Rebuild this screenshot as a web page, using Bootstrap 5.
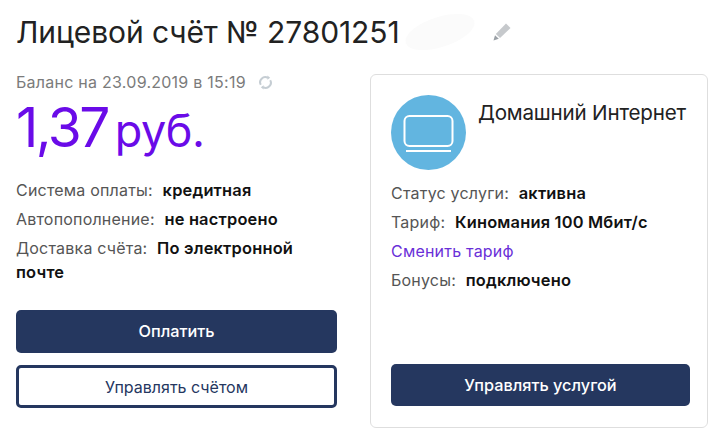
<!DOCTYPE html>
<html lang="ru">
<head>
    <meta charset="UTF-8">
    <meta name="viewport" content="width=device-width, initial-scale=1.0">
    <title>Лицевой счёт</title>
    <link rel="stylesheet" href="https://cdn.jsdelivr.net/npm/bootstrap@5.3.0/dist/css/bootstrap.min.css">
    <style>
        body {
            background-color: #fff;
            font-family: "Inter", "Liberation Sans", sans-serif;
            color: #222;
            overflow: hidden;
        }
        .page-wrap {
            width: 714px;
            height: 439px;
            padding: 0 6px 0 16px;
        }
        .title-row {
            height: 75px;
            padding-bottom: 11px;
        }
        .title-text {
            font-size: 30px;
            font-weight: 400;
            line-height: 52px;
            letter-spacing: -.1px;
            margin: 0;
        }
        .smudge {
            width: 72px;
            height: 30px;
            margin: 0 17px 0 4px;
            background: #fbfbfb;
            border-radius: 50%;
            transform: rotate(-18deg);
        }
        .left-side {
            width: 321px;
            margin-top: -3px;
        }
        .balance-date {
            font-size: 16px;
            color: #7b7b7b;
            line-height: 20px;
            letter-spacing: .25px;
            white-space: nowrap;
            margin-bottom: 3px;
        }
        .refresh-icon {
            margin-left: 12px;
        }
        .amount {
            color: #6a0be8;
            line-height: 64px;
            font-size: 55px;
            letter-spacing: -2.5px;
            margin-bottom: 15px;
        }
        .amount-cur {
            font-size: 45px;
            letter-spacing: -.5px;
            margin-left: 7px;
        }
        .info-line {
            font-size: 16px;
            line-height: 24px;
            margin-bottom: 5px;
            color: #555;
            letter-spacing: .2px;
        }
        .info-line b {
            font-size: 16.4px;
            font-weight: 600;
            color: #111;
            margin-left: 5px;
        }
        .info-link {
            color: #6a2fd8;
        }
        .left-btns {
            margin-top: 26px;
            gap: 12px;
        }
        .btn-navy {
            background-color: #25375f;
            color: #fff;
            border-radius: 5px;
            font-size: 16.3px;
            font-weight: 500;
            height: 43px;
            padding: 0;
            border: 0;
        }
        .btn-navy:hover { background-color: #25375f; color: #fff; }
        .btn-line {
            background: #fff;
            color: #25375f;
            border: 3px solid #25375f;
            border-radius: 5px;
            font-size: 16px;
            height: 43px;
            padding: 0;
        }
        .service-card {
            width: 338px;
            height: 354px;
            margin-left: 33px;
            margin-top: -1px;
            border: 1px solid #dedede;
            border-radius: 6px;
            padding: 20px 17px 21px 20px;
        }
        .service-head {
            margin-bottom: 11px;
        }
        .service-name {
            font-size: 20.6px;
            line-height: 36px;
            letter-spacing: -.2px;
            margin-left: 12px;
        }
        .btn-service {
            height: 42px;
        }
    </style>
</head>
<body>
    <div class="page-wrap">
        <div class="title-row d-flex align-items-center">
            <h1 class="title-text">Лицевой счёт № 27801251</h1>
            <span class="smudge"></span>
            <svg width="18" height="18" viewBox="0 0 18 18">
                <path d="M13 .5l4.5 4.5L7 15 2.8 11z" fill="#c6c9cc"/>
                <path d="M2 12.2l3.8 3.6L.5 17.5z" fill="#9aa0a6"/>
            </svg>
        </div>
        <div class="d-flex">
            <div class="left-side">
                <div class="balance-date d-flex align-items-center">
                    Баланс на 23.09.2019 в 15:19
                    <svg class="refresh-icon" width="15" height="15" viewBox="0 0 16 16" fill="none" stroke="#c5cdd3" stroke-width="2.2">
                        <path d="M3 10.5A5.5 5.5 0 0 1 10.5 3"/>
                        <path d="M13 5.5A5.5 5.5 0 0 1 5.5 13"/>
                        <path d="M10 .5l3 2.5-3 2z" fill="#c5cdd3" stroke="none"/>
                        <path d="M6 15.5l-3-2.5 3-2z" fill="#c5cdd3" stroke="none"/>
                    </svg>
                </div>
                <div class="amount">1,37<span class="amount-cur">руб.</span></div>
                <div class="info-line">Система оплаты: <b>кредитная</b></div>
                <div class="info-line">Автопополнение: <b>не настроено</b></div>
                <div class="info-line">Доставка счёта: <b>По электронной почте</b></div>
                <div class="left-btns d-flex flex-column">
                    <button type="button" class="btn btn-navy w-100">Оплатить</button>
                    <button type="button" class="btn btn-line w-100">Управлять счётом</button>
                </div>
            </div>
            <div class="service-card d-flex flex-column">
                <div class="service-head d-flex">
                    <svg width="75" height="75" viewBox="0 0 75 75" class="flex-shrink-0">
                        <circle cx="37.5" cy="37.5" r="37.5" fill="#62b5e0"/>
                        <rect x="13.5" y="21" width="48" height="30" rx="5" fill="none" stroke="#fff" stroke-width="2"/>
                        <rect x="15" y="55" width="45" height="2" fill="#fff"/>
                    </svg>
                    <div class="service-name">Домашний Интернет</div>
                </div>
                <div class="info-line">Статус услуги: <b>активна</b></div>
                <div class="info-line">Тариф: <b>Киномания 100 Мбит/с</b></div>
                <div class="info-line"><a href="#" class="info-link text-decoration-none">Сменить тариф</a></div>
                <div class="info-line">Бонусы: <b>подключено</b></div>
                <button type="button" class="btn btn-navy btn-service w-100 mt-auto">Управлять услугой</button>
            </div>
        </div>
    </div>
    <script src="https://cdn.jsdelivr.net/npm/bootstrap@5.3.0/dist/js/bootstrap.bundle.min.js"></script>
</body>
</html>
